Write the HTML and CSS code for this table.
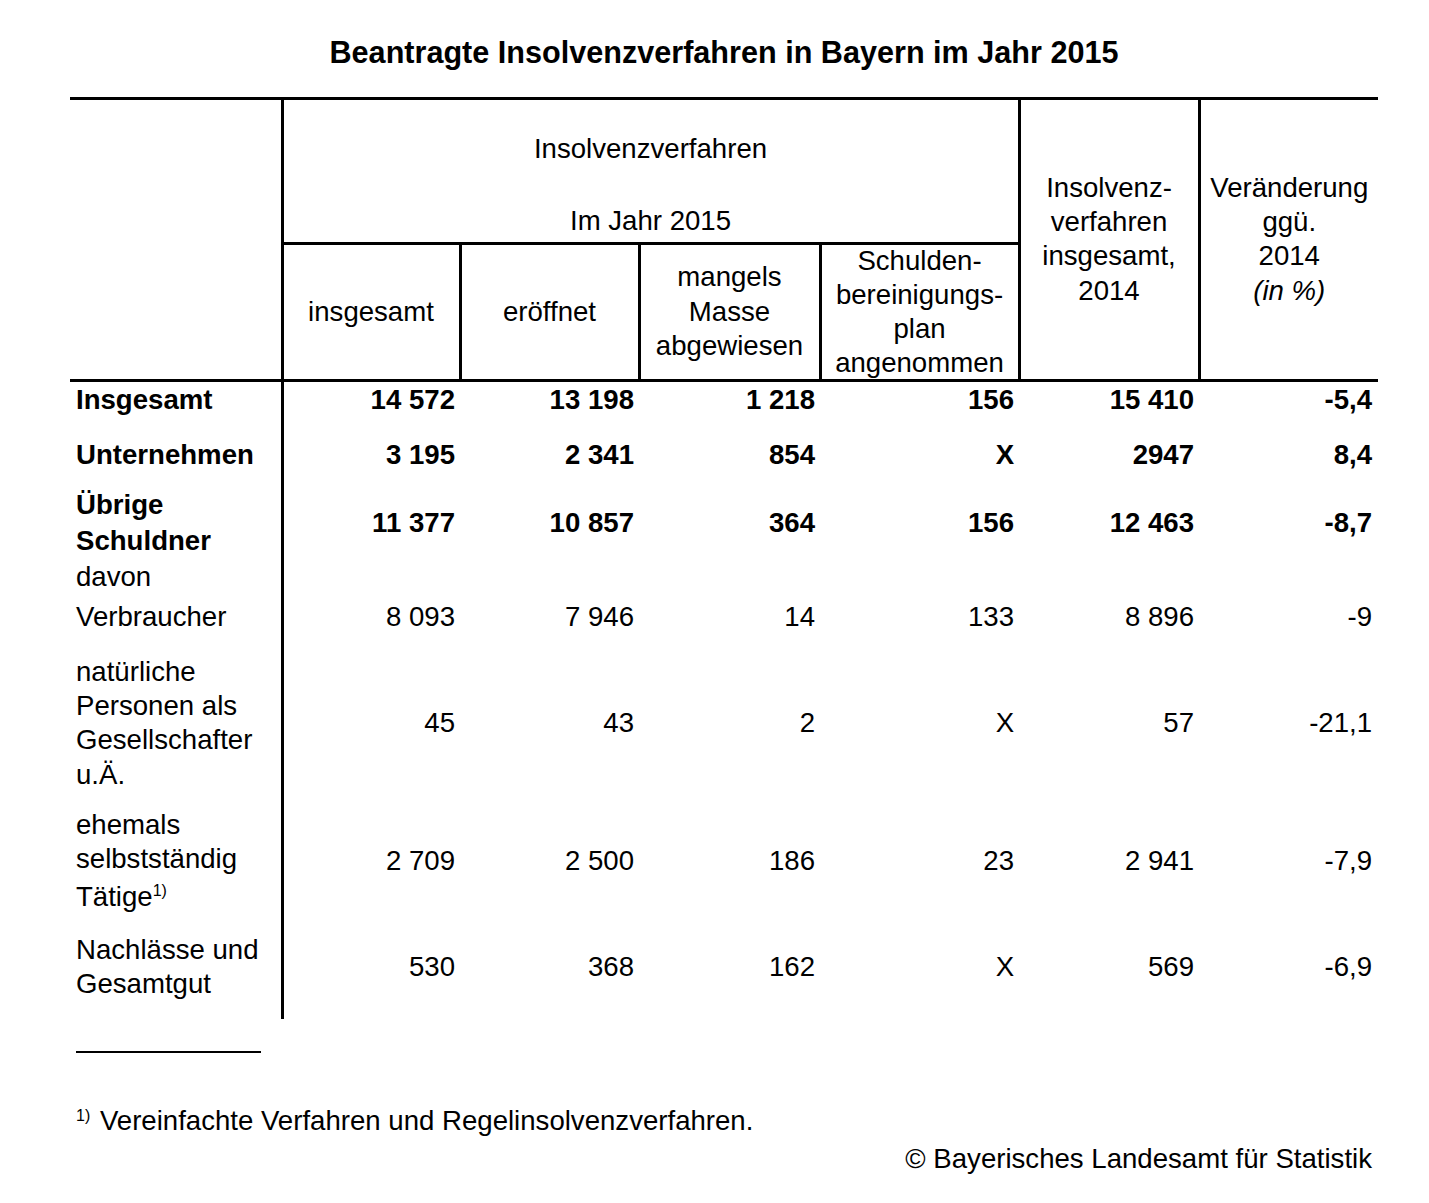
FILE: index.html
```html
<!DOCTYPE html>
<html lang="de">
<head>
<meta charset="utf-8">
<title>Beantragte Insolvenzverfahren in Bayern im Jahr 2015</title>
<link rel="stylesheet" href="styles.css">
</head>
<body>
<div class="page">
  <h1 class="title">Beantragte Insolvenzverfahren in Bayern im Jahr 2015</h1>
  <table class="stats">
    <colgroup>
      <col class="c-label">
      <col class="c1">
      <col class="c2">
      <col class="c3">
      <col class="c4">
      <col class="c5">
      <col class="c6">
    </colgroup>
    <thead>
      <tr class="h1">
        <th class="stub" rowspan="2"></th>
        <th class="group vr" colspan="4"><div class="group-top">Insolvenzverfahren</div><div>Im Jahr 2015</div></th>
        <th class="mid vr hb" rowspan="2">Insolvenz-<br>verfahren<br>insgesamt,<br>2014</th>
        <th class="mid hb" rowspan="2">Veränderung<br>ggü.<br>2014<br><i>(in %)</i></th>
      </tr>
      <tr class="h2">
        <th class="mid vr hb">insgesamt</th>
        <th class="mid vr hb">eröffnet</th>
        <th class="mid vr hb">mangels<br>Masse<br>abgewiesen</th>
        <th class="mid vr hb"><div class="tight">Schulden-<br>bereinigungs-<br>plan<br>angenommen</div></th>
      </tr>
    </thead>
    <tbody>
      <tr class="r-a bold">
        <td class="label">Insgesamt</td>
        <td class="num">14&nbsp;572</td><td class="num">13&nbsp;198</td><td class="num">1&nbsp;218</td><td class="num">156</td><td class="num">15&nbsp;410</td><td class="num last">-5,4</td>
      </tr>
      <tr class="r-b bold">
        <td class="label">Unternehmen</td>
        <td class="num">3&nbsp;195</td><td class="num">2&nbsp;341</td><td class="num">854</td><td class="num">X</td><td class="num">2947</td><td class="num last">8,4</td>
      </tr>
      <tr class="r-c bold">
        <td class="label">Übrige<br>Schuldner</td>
        <td class="num">11&nbsp;377</td><td class="num">10&nbsp;857</td><td class="num">364</td><td class="num">156</td><td class="num">12&nbsp;463</td><td class="num last">-8,7</td>
      </tr>
      <tr class="r-davon">
        <td class="label">davon</td>
        <td></td><td></td><td></td><td></td><td></td><td></td>
      </tr>
      <tr class="r-verb">
        <td class="label">Verbraucher</td>
        <td class="num">8&nbsp;093</td><td class="num">7&nbsp;946</td><td class="num">14</td><td class="num">133</td><td class="num">8&nbsp;896</td><td class="num last">-9</td>
      </tr>
      <tr class="r-nat">
        <td class="label">natürliche<br>Personen als<br>Gesellschafter<br>u.Ä.</td>
        <td class="num">45</td><td class="num">43</td><td class="num">2</td><td class="num">X</td><td class="num">57</td><td class="num last">-21,1</td>
      </tr>
      <tr class="r-ehem">
        <td class="label">ehemals<br>selbstständig<br>Tätige<sup class="fn-ref">1)</sup></td>
        <td class="num">2&nbsp;709</td><td class="num">2&nbsp;500</td><td class="num">186</td><td class="num">23</td><td class="num">2&nbsp;941</td><td class="num last">-7,9</td>
      </tr>
      <tr class="r-nach">
        <td class="label">Nachlässe und<br>Gesamtgut</td>
        <td class="num">530</td><td class="num">368</td><td class="num">162</td><td class="num">X</td><td class="num">569</td><td class="num last">-6,9</td>
      </tr>
    </tbody>
  </table>
  <div class="rule"></div>
  <p class="note"><sup>1)</sup> Vereinfachte Verfahren und Regelinsolvenzverfahren.</p>
  <p class="source">© Bayerisches Landesamt für Statistik</p>
</div>
</body>
</html>
```

FILE: styles.css
```css
html, body {
  margin: 0;
  padding: 0;
  background: #fff;
  color: #000;
}

body {
  font-family: "Liberation Sans", Arial, sans-serif;
  font-size: 27.6px;
  line-height: 34.33px;
}

.page {
  width: 1308px;
  margin-left: 70px;
}

.title {
  margin: 0;
  padding-top: 35px;
  height: 62px;
  font-size: 30.6px;
  line-height: 34px;
  font-weight: bold;
  text-align: center;
}

.stats {
  width: 1308px;
  table-layout: fixed;
  border-collapse: collapse;
  border-spacing: 0;
  font-size: 27.6px;
  line-height: 34.33px;
}

.c-label { width: 212px; }
.c1 { width: 178px; }
.c2 { width: 179px; }
.c3 { width: 181px; }
.c4 { width: 199px; }
.c5 { width: 180px; }
.c6 { width: 179px; }

.stats th {
  font-weight: normal;
  padding: 0;
  text-align: center;
}

.stats thead tr.h1 th {
  border-top: 3px solid #000;
}

.stats th.stub {
  border-right: 3px solid #000;
  border-bottom: 3px solid #000;
}

.stats th.group {
  height: 138px;
  vertical-align: bottom;
  padding-bottom: 4px;
  border-bottom: 3px solid #000;
}

.group-top {
  margin-bottom: 37px;
}

.stats th.mid {
  vertical-align: middle;
}

.stats th.vr {
  border-right: 3px solid #000;
}

.stats th.hb {
  border-bottom: 3px solid #000;
}

.tight {
  margin-top: -1.5px;
  margin-bottom: -2px;
}

.stats td {
  padding: 0;
  vertical-align: middle;
}

.stats td.label {
  text-align: left;
  padding-left: 6px;
  border-right: 3px solid #000;
}

.stats td.num {
  text-align: right;
  padding-right: 5px;
}

.stats td.num.last {
  padding-right: 6px;
}

.bold td {
  font-weight: bold;
}

.r-a td { padding-top: 1px; }
.r-b td { padding-top: 20.5px; }
.r-c td { padding-top: 14.7px; line-height: 36px; }
.r-davon td { padding-top: 1px; }
.r-verb td { padding-top: 5.7px; }
.r-nat td { padding-top: 20.7px; }
.r-ehem td { padding-top: 16px; }
.r-nach td { padding-top: 19px; padding-bottom: 17px; }

sup {
  font-size: 16px;
  line-height: 0;
  vertical-align: 10px;
}

sup.fn-ref {
  line-height: 28.4px;
}

.rule {
  width: 185px;
  margin-left: 6px;
  margin-top: 32px;
  border-top: 2px solid #000;
}

.note {
  margin: 51px 0 0 6px;
  line-height: 34.33px;
}

.note sup {
  vertical-align: 9px;
  margin-right: 2px;
}

.source {
  margin: 3.7px 0 0 0;
  padding-right: 6px;
  text-align: right;
  line-height: 34.33px;
}
```
